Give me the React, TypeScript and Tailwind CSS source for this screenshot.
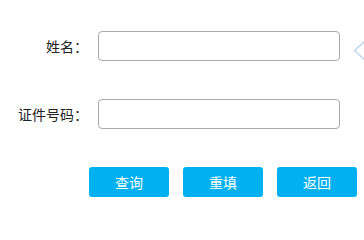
const font = { fontFamily: '"Microsoft YaHei", "Noto Sans CJK SC", sans-serif' };

const Field = ({ label }: { label: string }) => (
  <div className="flex items-center h-[30px]">
    <label className="w-[88px] text-right text-[14px] text-[#222] leading-none">{label}</label>
    <input
      type="text"
      className="ml-[10px] w-[242px] h-[30px] rounded-[4px] border border-[#a9a9a9] bg-white outline-none px-2 text-[14px]"
    />
  </div>
);

export default function App() {
  return (
    <div className="relative w-[364px] h-[213px] overflow-hidden bg-white" style={font}>
      <div className="pt-[31px] flex flex-col gap-[38px]">
        <Field label="姓名：" />
        <Field label="证件号码：" />
        <div className="flex gap-[14px] pl-[89px]">
          {["查询", "重填", "返回"].map((t) => (
            <button
              key={t}
              className="w-[80px] h-[30px] rounded-[3px] bg-[#00b0f0] text-white text-[14px] leading-none"
            >
              {t}
            </button>
          ))}
        </div>
      </div>
      {/* tooltip pointer, cut off at the edge */}
      <svg className="absolute left-[353px] top-[39px]" width="14" height="23" viewBox="0 0 14 23">
        <path d="M13 1 L1.5 11.5 L13 22" fill="white" stroke="#b7d3f2" strokeWidth="1.2" />
      </svg>
    </div>
  );
}
